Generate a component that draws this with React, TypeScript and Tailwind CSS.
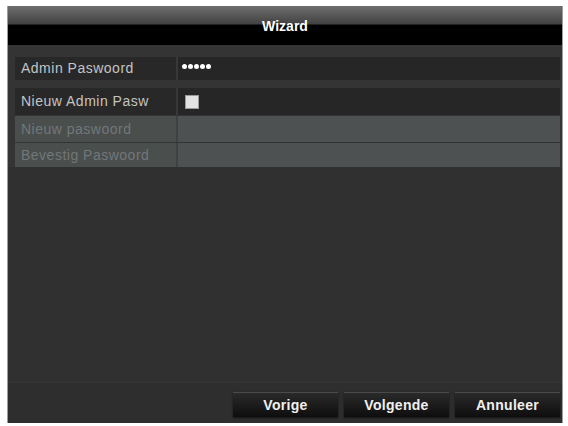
const rows = [
  { label: 'Admin Paswoord', kind: 'password', h: 'h-[23px]' },
  { label: 'Nieuw Admin Pasw', kind: 'checkbox', h: 'h-[27px]' },
  { label: 'Nieuw paswoord', kind: 'disabled', h: 'h-[26px]' },
  { label: 'Bevestig Paswoord', kind: 'disabled', h: 'h-[24px]' },
]

const WizardButton = ({ label }: { label: string }) => (
  <button className="w-[105px] h-[25px] border-t border-[#4a4a4a] bg-[linear-gradient(to_bottom,#2a2a2a,#0e0e0e)] text-[14px] font-bold tracking-[0.3px] text-[#f0f0f0] shadow-[0_1px_2px_rgba(0,0,0,0.6)]">
    {label}
  </button>
)

const App = () => {
  return (
    <div className="w-[568px] h-[426px] bg-white pl-[7px] pt-[6px] font-[family-name:Liberation_Sans,Arial,sans-serif]">
      <div className="w-[556px] h-[417px] flex flex-col bg-[#303030] border-l border-r border-[#9c9c9c]">
        <div className="h-[39px] flex items-center justify-center pt-[2px] bg-[linear-gradient(to_bottom,#6e6e6e_0%,#424242_46%,#000_49%,#000_100%)]">
          <span className="text-[14px] font-bold text-white">Wizard</span>
        </div>

        <div className="flex flex-col pl-[7px] pr-[2px] pt-[12px] bg-[#343434]">
          {rows.map((row, i) => {
            const disabled = row.kind === 'disabled'
            return (
              <div
                key={row.label}
                className={`flex ${row.h} ${i === 1 ? 'mt-[8px]' : ''} ${i === 2 ? 'mt-[1px]' : ''} ${i === 3 ? 'mt-[1px]' : ''}`}
              >
                <div
                  className={`w-[161px] flex items-center pl-[6px] text-[14px] tracking-[0.5px] ${
                    disabled ? 'bg-[#4a4e4d] text-[#72777a]' : 'bg-[#282828] text-[#c4c4c4]'
                  }`}
                >
                  {row.label}
                </div>
                <div className={`w-[2px] ${disabled ? 'bg-[#3e4141]' : 'bg-[#383838]'}`} />
                <div
                  className={`flex-1 flex items-center ${
                    disabled ? 'bg-[#4d5151]' : 'bg-[#262626]'
                  }`}
                >
                  {row.kind === 'password' && (
                    <div className="flex gap-[1px] pl-[4px] pb-[4px]">
                      {[0, 1, 2, 3, 4].map((d) => (
                        <span key={d} className="w-[5px] h-[5px] rounded-full bg-white" />
                      ))}
                    </div>
                  )}
                  {row.kind === 'checkbox' && (
                    <span className="ml-[7px] w-[14px] h-[14px] bg-[#e2e2e2] border border-[#9a9a9a]" />
                  )}
                </div>
              </div>
            )
          })}
        </div>

        <div className="flex-1 bg-[#303030]" />

        <div className="h-[41px] flex flex-col bg-[#2e2e2e] border-t border-[#363636] pr-[2px]">
          <div className="flex justify-end gap-[6px] pt-[9px]">
            <WizardButton label="Vorige" />
            <WizardButton label="Volgende" />
            <WizardButton label="Annuleer" />
          </div>
        </div>
      </div>
    </div>
  )
}

export default App
